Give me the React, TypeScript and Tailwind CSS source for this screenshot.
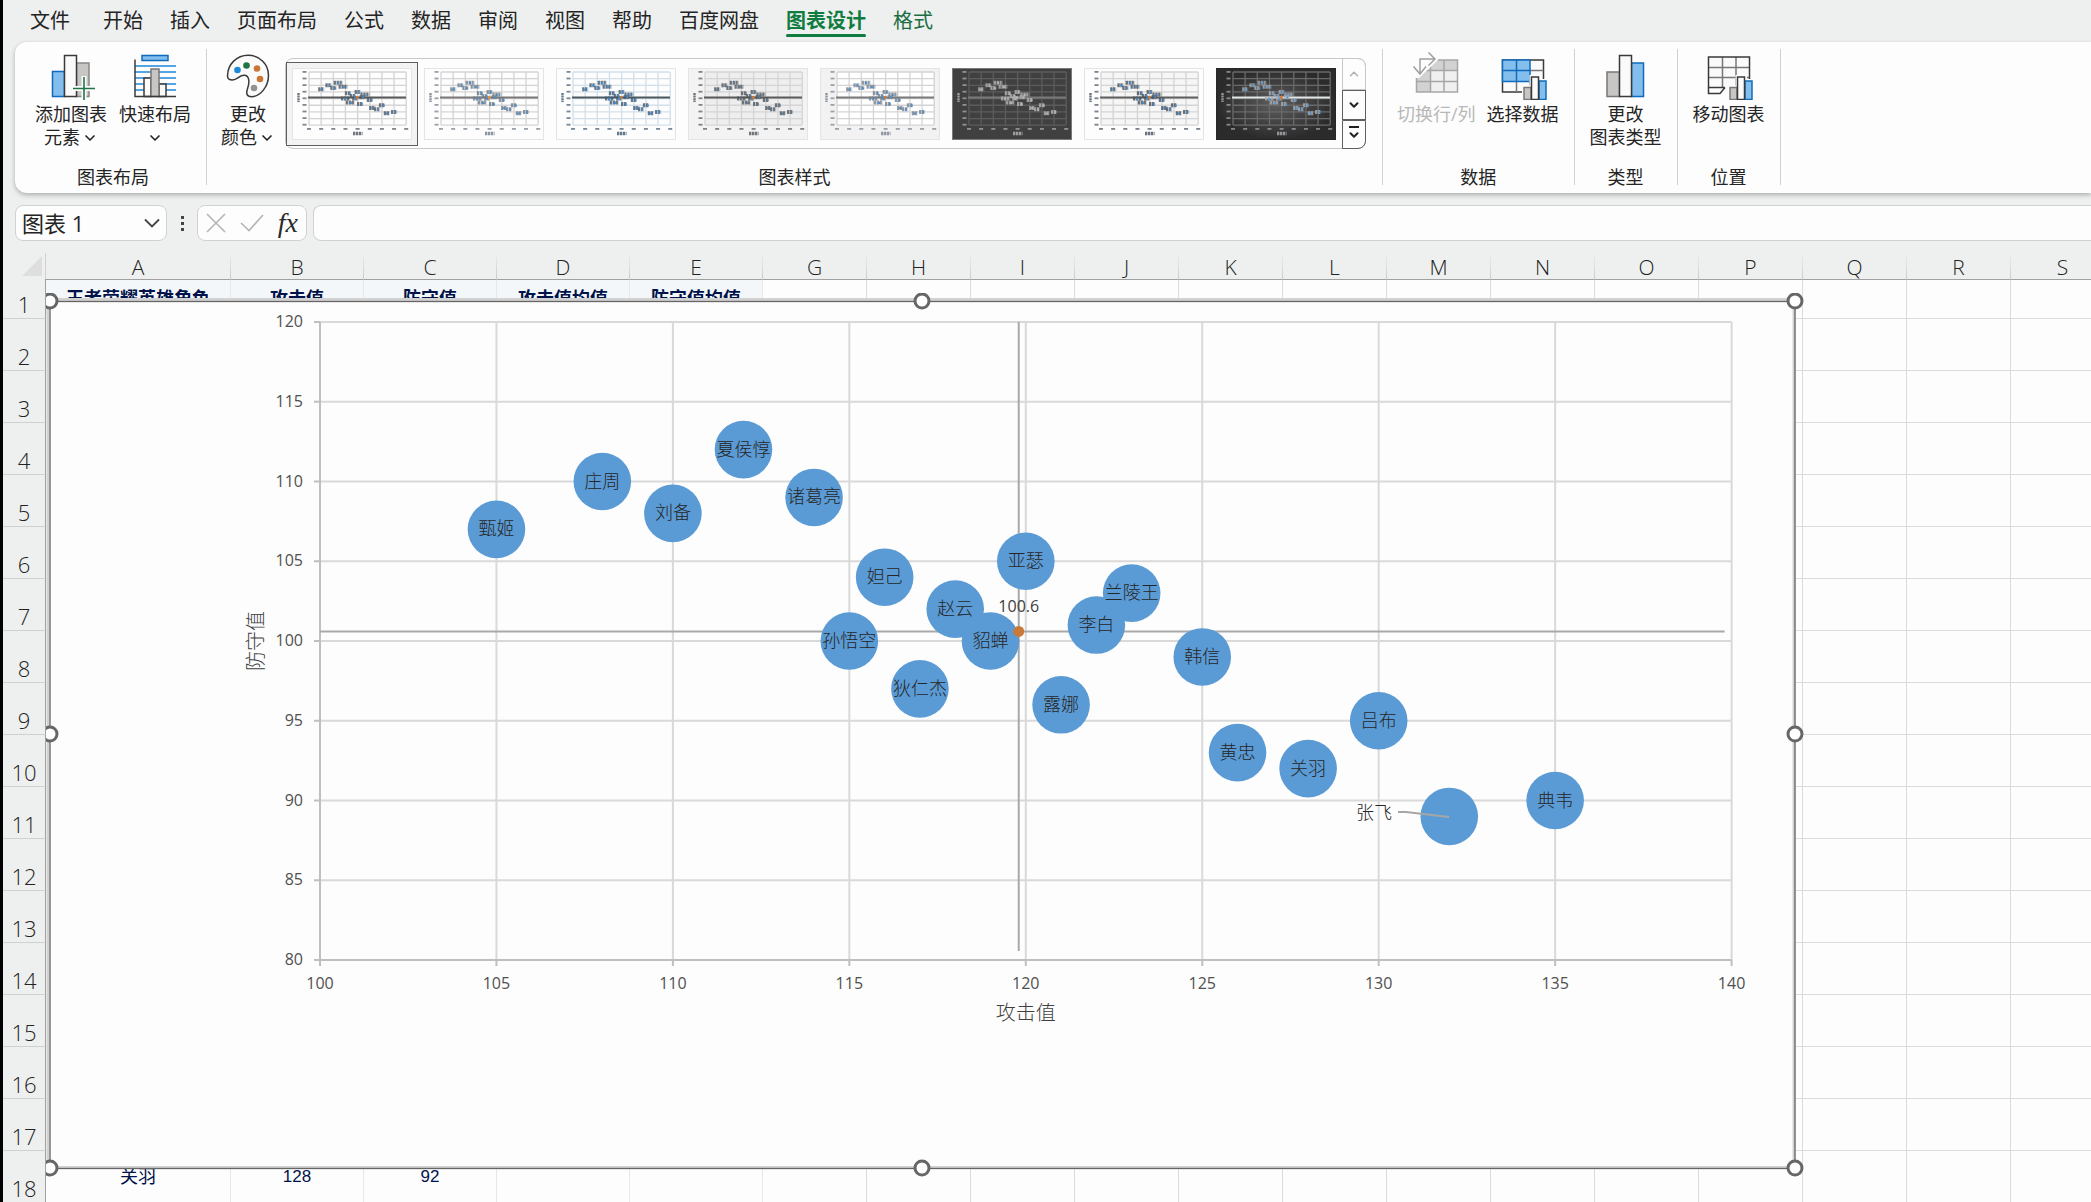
import { useState } from "react";
import type { ReactNode } from "react";
import { ChevronDown, ChevronUp } from "lucide-react";

const tabs = ["开始", "插入", "页面布局", "公式", "数据", "审阅", "视图", "帮助", "百度网盘", "图表设计", "格式"];

const heroes = [
  { name: "甄姬", attack: 105, defense: 107 },
  { name: "庄周", attack: 108, defense: 110 },
  { name: "刘备", attack: 110, defense: 108 },
  { name: "夏侯惇", attack: 112, defense: 112 },
  { name: "诸葛亮", attack: 114, defense: 109 },
  { name: "妲己", attack: 116, defense: 104 },
  { name: "孙悟空", attack: 115, defense: 100 },
  { name: "狄仁杰", attack: 117, defense: 97 },
  { name: "赵云", attack: 118, defense: 102 },
  { name: "貂蝉", attack: 119, defense: 100 },
  { name: "亚瑟", attack: 120, defense: 105 },
  { name: "露娜", attack: 121, defense: 96 },
  { name: "兰陵王", attack: 123, defense: 103 },
  { name: "李白", attack: 122, defense: 101 },
  { name: "韩信", attack: 125, defense: 99 },
  { name: "黄忠", attack: 126, defense: 93 },
  { name: "关羽", attack: 128, defense: 92 },
  { name: "吕布", attack: 130, defense: 95 },
  { name: "张飞", attack: 132, defense: 89 },
  { name: "典韦", attack: 135, defense: 90 },
];

const mean = { attack: 119.8, defense: 100.6 };

type ThumbStyle = {
  bg: string;
  plot: string;
  border: string;
  grid: string;
  text: string;
  mark: string;
  center: string;
  line: string;
};

const light: ThumbStyle = {
  bg: "#fdfdfd",
  plot: "#fdfdfd",
  border: "#e4e4e4",
  grid: "#d4d4d4",
  text: "#4d5560",
  mark: "#4a8fd0",
  center: "#c97a3a",
  line: "#5a5a5a",
};

const thumbs: ThumbStyle[] = [
  light,
  { ...light, text: "#6f7b88", line: "#7d7878", center: "#f09030" },
  { ...light, grid: "#d3dfe9", text: "#3f5870", line: "#4c5a60" },
  { ...light, bg: "#f3f3f3", plot: "#eeeeee", text: "#50565c", mark: "#5b7d9c" },
  { ...light, bg: "#f2f2f2", plot: "#ffffff", text: "#75808c", line: "#7a7a7a" },
  { ...light, bg: "#404040", plot: "#404040", border: "#7a7a7a", grid: "#5c5c5c", text: "#b4b4b4", mark: "#b4b4b4", center: "#b4b4b4", line: "#7a7a7a" },
  { ...light, plot: "#f6f6f6", text: "#45505c", line: "#5f5f5f" },
  { ...light, bg: "url(#vignette)", plot: "none", border: "#262626", grid: "#6a6a6a", text: "#a9adb2", mark: "#4f9ae0", center: "#e0702a", line: "#e2e6e6" },
];

function Thumbnail({ style }: { style: ThumbStyle }) {
  const px = (v: number) => 17 + (v - 100) * 2.43;
  const py = (v: number) => 4 + (120 - v) * 1.33;
  return (
    <svg width="120" height="72" viewBox="0 0 120 72" aria-hidden="true">
      <defs>
        <radialGradient id="vignette">
          <stop offset="0" stopColor="#5e5e5e" />
          <stop offset="1" stopColor="#2b2b2b" />
        </radialGradient>
        <filter id="soft">
          <feGaussianBlur stdDeviation="0.6" />
        </filter>
      </defs>
      <rect x="0.5" y="0.5" width="119" height="71" fill={style.bg} stroke={style.border} />
      <rect x="17" y="4" width="97" height="53" fill={style.plot} />
      <g stroke={style.grid} strokeWidth="1.3">
        {[0, 1, 2, 3, 4, 5, 6, 7, 8].map((i) => (
          <g key={i}>
            <line x1={17 + i * 12.15} x2={17 + i * 12.15} y1="4" y2="57" />
            <line x1="17" x2="114" y1={4 + i * 6.65} y2={4 + i * 6.65} />
          </g>
        ))}
      </g>
      <line x1="16" x2="114" y1="29.5" y2="29.5" stroke={style.line} strokeWidth="1.8" />
      <g filter="url(#soft)">
        {[0, 1, 2, 3, 4, 5, 6, 7, 8].map((i) => (
          <g key={i} fill={style.text} opacity="0.7">
            <rect x={10.5} y={3 + i * 6.6} width="4" height="1.8" />
            <rect x={15 + i * 12.15} y="60" width="4" height="1.8" />
          </g>
        ))}
        <path d="M6.5 25v9" stroke={style.text} strokeWidth="2.4" strokeDasharray="2 0.6" opacity="0.8" />
        <path d="M61 65.500h9.500" stroke={style.text} strokeWidth="3.400" strokeDasharray="2.400 0.600" opacity="0.8" />
        {heroes.map((h, i) => {
          const half = h.name.length * 1.5;
          const x = px(h.attack);
          const y = py(h.defense);
          return (
            <g key={h.name}>
              <path d={`M${x - half} ${y}h${half * 2}`} stroke={style.text} strokeWidth="4" strokeDasharray="2.300 0.600" opacity="0.8" />
              <rect x={x - 1 + (i % 3)} y={y - 0.8} width="1.8" height="2.2" fill={style.mark} />
            </g>
          );
        })}
        <circle cx={px(119.8)} cy="29.5" r="1.5" fill={style.center} />
      </g>
    </svg>
  );
}

function Icon({ children }: { children: ReactNode }) {
  return (
    <svg width="48" height="48" viewBox="0 0 48 48" fill="none" aria-hidden="true" className="shrink-0">
      {children}
    </svg>
  );
}

function AddElementIcon() {
  return (
    <Icon>
      <rect x="5.5" y="19.5" width="12" height="25" fill="#83beec" stroke="#0f6cbd" strokeWidth="1.5" />
      <rect x="29.5" y="11" width="12.5" height="33.5" fill="#c8c6c4" stroke="#8a8886" strokeWidth="1.5" />
      <rect x="17.5" y="3.5" width="12" height="41" fill="#fafafa" stroke="#3b3a39" strokeWidth="1.5" />
      <path d="M37 24v24M25 36.500h23" stroke="#fdfdfd" strokeWidth="5" />
      <path d="M37 25v23M26 36.500h22.500" stroke="#217346" strokeWidth="1.600" />
    </Icon>
  );
}

function QuickLayoutIcon() {
  return (
    <Icon>
      <rect x="11" y="3.500" width="26" height="5" fill="#83beec" stroke="#0f6cbd" strokeWidth="1.5" />
      <path d="M4 14h41M4 20h41M4 26h41M4 32h41M4 38h41" stroke="#1e88d9" strokeWidth="1.5" />
      <rect x="13" y="26" width="7" height="18.500" fill="#fafafa" stroke="#3b3a39" strokeWidth="1.5" />
      <rect x="28" y="32" width="7" height="12.500" fill="#fafafa" stroke="#3b3a39" strokeWidth="1.5" />
      <rect x="20" y="17" width="8" height="27.500" fill="#c8c6c4" stroke="#797775" strokeWidth="1.5" />
      <path d="M4 7.500v37h41" stroke="#3b3a39" strokeWidth="1.5" />
    </Icon>
  );
}

function PaletteIcon() {
  return (
    <Icon>
      <path
        d="M3.500 24C3.500 12 13 3.300 24 3.300c12 0 20.500 9 20.500 20C44.500 35 36 44.700 27.500 44.700c-5 0-5.500-3.500-4-8C25.500 31 26 23.300 20 23.300c-5 0-6.500 4.700-11.500 4.700-3.500 0-5-1.500-5-4z"
        fill="#fafafa"
        stroke="#3b3a39"
        strokeWidth="1.5"
      />
      <circle cx="13.5" cy="18" r="3.300" fill="#1e88d9" />
      <circle cx="22.500" cy="13.500" r="3.300" fill="#217346" />
      <circle cx="33" cy="16.500" r="3.300" fill="#ca7637" />
      <circle cx="36" cy="27" r="3.300" fill="#ca7637" />
      <circle cx="30" cy="36" r="3.300" fill="#949290" />
    </Icon>
  );
}

function SwitchIcon() {
  return (
    <Icon>
      <path d="M4.500 8h41v32h-41z" fill="#f0f0f0" />
      <path d="M4.500 8h41v10.500h-27V40h-14z" fill="#d2d2d2" />
      <path d="M4.500 8h41v32h-41zM18.500 8v32M32 8v32M4.500 18.500h41M4.500 29.500h41" stroke="#a6a6a6" strokeWidth="1.5" />
      <path d="M0 26V0h26v8L7 26z" fill="#fdfdfd" />
      <path d="M8 22V7h15M1.500 14.500L8 22l6-7.500M16.500 0.500L23 7l-6.500 6.500" stroke="#a0a0a0" strokeWidth="1.5" />
    </Icon>
  );
}

function SmallBars() {
  return (
    <>
      <path d="M23 48V33.500h7.500V23H42v4h6v21z" fill="#fdfdfd" />
      <rect x="25" y="35.500" width="7" height="12" fill="#c8c6c4" stroke="#797775" strokeWidth="1.5" />
      <rect x="40" y="29" width="7" height="18.500" fill="#83beec" stroke="#0f6cbd" strokeWidth="1.5" />
      <rect x="32.500" y="25" width="7" height="22.500" fill="#fafafa" stroke="#3b3a39" strokeWidth="1.5" />
    </>
  );
}

function SelectDataIcon() {
  return (
    <Icon>
      <path d="M3.500 8h41v32h-41z" fill="#fafafa" stroke="#3b3a39" strokeWidth="1.5" />
      <path d="M31 18.500h13.500M17.500 29.500V40M31 29.500V40" stroke="#797775" strokeWidth="1.5" />
      <path d="M3.500 8H31v21.500H3.500zM17.500 8v21.500M3.500 18.500H31" fill="#83beec" stroke="#0f6cbd" strokeWidth="1.500" />
      <SmallBars />
    </Icon>
  );
}

function ChangeTypeIcon() {
  return (
    <Icon>
      <rect x="5" y="20" width="12.500" height="24.500" fill="#c8c6c4" stroke="#797775" strokeWidth="1.5" />
      <rect x="29.500" y="11" width="12" height="33.500" fill="#83beec" stroke="#0f6cbd" strokeWidth="1.5" />
      <rect x="17.500" y="3.500" width="12" height="41" fill="#fafafa" stroke="#3b3a39" strokeWidth="1.5" />
    </Icon>
  );
}

function MoveChartIcon() {
  return (
    <Icon>
      <path d="M3.500 5h41v30.500h-41z" fill="#fafafa" />
      <path d="M17.500 5v30.500M31 5v30.500M3.500 15.500h41M3.500 25.500h41" stroke="#797775" strokeWidth="1.5" />
      <path d="M20 35.500H3.500V5h41v25M3.500 35.500v6H15l5-6" fill="none" stroke="#3b3a39" strokeWidth="1.5" />
      <SmallBars />
    </Icon>
  );
}

type RibbonButtonProps = {
  icon: ReactNode;
  lines: string[];
  dropdown?: boolean;
  disabled?: boolean;
  compact?: boolean;
};

function RibbonButton({ icon, lines, dropdown, disabled, compact }: RibbonButtonProps) {
  return (
    <button
      disabled={disabled}
      className={
        "flex flex-col items-center px-1 pt-[3px] text-lg leading-[23px] whitespace-nowrap disabled:text-[#b8b8b8] " +
        (compact ? "w-[74px]" : "min-w-[82px]")
      }
    >
      {icon}
      <span className="mt-[3px]">{lines[0]}</span>
      {lines.length > 1 && (
        <span className="flex h-[23px] items-center gap-0.5">
          {lines[1]}
          {dropdown && <ChevronDown size={16} strokeWidth={2.5} />}
        </span>
      )}
    </button>
  );
}

function RibbonGroup({ label, children }: { label: string; children: ReactNode }) {
  return (
    <section aria-label={label} className="flex shrink-0 flex-col border-r border-[#d1d1d1] px-2.5">
      <div className="flex flex-1 justify-center gap-0.5">{children}</div>
      <div className="text-center text-lg leading-4">{label}</div>
    </section>
  );
}

function StyleGallery() {
  const [selected, setSelected] = useState(0);
  return (
    <div className="mt-[9px] mr-1.5 flex h-[91px] rounded-lg border border-[#c8c8c8]">
      <div className="flex items-center">
        {thumbs.map((thumb, i) => (
          <button
            key={i}
            aria-label={`图表样式 ${i + 1}`}
            onClick={() => setSelected(i)}
            className={
              "flex h-[84px] w-[132px] items-center justify-center border " +
              (i === selected ? "border-[#5f5f5f] bg-[#f3f3f3]" : "border-transparent")
            }
          >
            <Thumbnail style={thumb} />
          </button>
        ))}
      </div>
      <div className="-my-px -mr-px flex w-6 flex-col">
        <button aria-label="向上" className="flex h-8 items-center justify-center rounded-tr-lg border border-[#c8c8c8] text-[#b0b0b0]">
          <ChevronUp size={14} strokeWidth={2.5} />
        </button>
        <button aria-label="向下" className="flex flex-1 items-center justify-center border border-[#5f5f5f]">
          <ChevronDown size={14} strokeWidth={3.5} />
        </button>
        <button aria-label="其他" className="flex flex-1 flex-col items-center justify-center rounded-br-lg border border-[#5f5f5f]">
          <span className="h-0.5 w-2.5 bg-[#1f1f1f]" />
          <ChevronDown size={14} strokeWidth={3.5} />
        </button>
      </div>
    </div>
  );
}

function Ribbon() {
  return (
    <div className="ml-3 flex h-[151px] shrink-0 overflow-hidden rounded-l-xl bg-[#fdfdfd] pt-[7px] pb-2 pl-[5px] shadow-[0_2px_5px_rgba(0,0,0,0.28)]">
      <RibbonGroup label="图表布局">
        <RibbonButton icon={<AddElementIcon />} lines={["添加图表", "元素"]} dropdown />
        <RibbonButton icon={<QuickLayoutIcon />} lines={["快速布局", ""]} dropdown />
      </RibbonGroup>
      <RibbonGroup label="图表样式">
        <div className="-ml-1.5 flex">
          <RibbonButton icon={<PaletteIcon />} lines={["更改", "颜色"]} dropdown compact />
          <StyleGallery />
        </div>
      </RibbonGroup>
      <RibbonGroup label="数据">
        <RibbonButton icon={<SwitchIcon />} lines={["切换行/列"]} disabled />
        <RibbonButton icon={<SelectDataIcon />} lines={["选择数据"]} />
      </RibbonGroup>
      <RibbonGroup label="类型">
        <RibbonButton icon={<ChangeTypeIcon />} lines={["更改", "图表类型"]} />
      </RibbonGroup>
      <RibbonGroup label="位置">
        <RibbonButton icon={<MoveChartIcon />} lines={["移动图表"]} />
      </RibbonGroup>
    </div>
  );
}

function FormulaBar() {
  return (
    <div className="mt-3 ml-3 flex h-9 shrink-0 items-stretch">
      <div className="flex w-[152px] items-center rounded-lg border border-[#d1d1d1] bg-[#fdfdfd] pr-1.5 pl-1.5">
        <input aria-label="名称框" defaultValue="图表 1" className="w-0 flex-1 bg-transparent text-[22px] leading-8 outline-none" />
        <button aria-label="名称列表">
          <svg width="16" height="10" viewBox="0 0 16 10" fill="none" stroke="#444" strokeWidth="1.8">
            <path d="M1 1.500l7 7 7-7" />
          </svg>
        </button>
      </div>
      <div className="flex w-[30px] flex-col items-center justify-center gap-[3px]">
        <span className="size-[3px] bg-[#444]" />
        <span className="size-[3px] bg-[#444]" />
        <span className="size-[3px] bg-[#444]" />
      </div>
      <div className="flex w-[110px] items-center justify-between rounded-lg border border-[#d1d1d1] bg-[#fdfdfd] px-2">
        <button aria-label="取消">
          <svg width="20" height="20" viewBox="0 0 20 20" fill="none" stroke="#b5b5b5" strokeWidth="1.6">
            <path d="M1 1l18 18M19 1L1 19" />
          </svg>
        </button>
        <button aria-label="输入">
          <svg width="24" height="20" viewBox="0 0 24 20" fill="none" stroke="#b5b5b5" strokeWidth="1.6">
            <path d="M1 10l8 7.500L23 2" />
          </svg>
        </button>
        <button aria-label="插入函数" className="font-['Liberation_Serif',serif] text-[28px] leading-7 font-medium text-[#2b2b2b] italic">
          fx
        </button>
      </div>
      <input aria-label="编辑栏" className="ml-1.5 min-w-0 flex-1 rounded-l-lg border border-r-0 border-[#d1d1d1] bg-[#fdfdfd] px-2 outline-none" />
    </div>
  );
}

const columns = ["A", "B", "C", "D", "E", "G", "H", "I", "J", "K", "L", "M", "N", "O", "P", "Q", "R", "S"];
const headings = ["王者荣耀英雄角色", "攻击值", "防守值", "攻击值均值", "防守值均值"];
const rows = Array.from({ length: 18 }, (_, i) => i + 1);

function cellText(row: number, col: number) {
  if (row === 1) return headings[col];
  if (row === 18) return ["关羽", "128", "92"][col];
  return undefined;
}

function columnWidth(col: number) {
  if (col === 0) return "w-[185px]";
  if (col < 5) return "w-[133px]";
  return "w-[104px]";
}

function cellClass(row: number, col: number) {
  let cls = "border-r p-0 text-center align-middle leading-5 whitespace-nowrap text-[#00124a] ";
  if (col < 5) cls += "border-r-[#e8e8e8] ";
  else cls += "border-r-[#dcdcdc] ";
  if (row === 1) cls += col < 5 ? "border-t border-t-[#a0a0a0] bg-[#f4f7fa] text-lg font-bold " : "border-t border-t-[#a0a0a0] ";
  else if (row === 18) cls += col === 0 ? "text-lg " : "text-[17px] ";
  cls += row === 18 ? "border-b border-b-[#b8b8b8]" : "border-b border-b-[#dcdcdc]";
  return cls;
}

function Grid() {
  return (
    <table className="w-[2112px] table-fixed border-separate border-spacing-0 bg-[#fdfdfd] font-['Liberation_Sans','Noto_Sans_CJK_SC',sans-serif]">
      <colgroup>
        <col className="w-[43px]" />
        {columns.map((c, i) => (
          <col key={c} className={columnWidth(i)} />
        ))}
      </colgroup>
      <thead>
        <tr className="h-[26px] bg-[#eef0ef]">
          <td className="border-r border-[#d0d0d0] p-0">
            <svg width="20" height="20" viewBox="0 0 20 20" className="ml-auto mr-[3px]" aria-hidden="true">
              <path d="M20 0v20H0z" fill="#dedede" />
            </svg>
          </td>
          {columns.map((c) => (
            <th
              key={c}
              scope="col"
              className="border-r p-0 pt-0.5 font-['Open_Sans','Noto_Sans',sans-serif] text-[21px] leading-6 font-light text-[#222] [border-image:linear-gradient(to_bottom,#eef0ef,#c8c8c8)_1]"
            >
              {c}
            </th>
          ))}
        </tr>
      </thead>
      <tbody>
        {rows.map((row) => (
          <tr key={row} className={row === 1 ? "h-10" : "h-[52px]"}>
            <th
              scope="row"
              className="border-r border-b border-r-[#a0a0a0] border-b-[#d0d0d0] bg-[#eef0ef] p-0 align-bottom font-['Open_Sans','Noto_Sans',sans-serif] text-[22px] leading-7 font-light text-[#222]"
            >
              {row}
            </th>
            {columns.map((c, i) => (
              <td key={c} className={cellClass(row, i)}>
                {cellText(row, i)}
              </td>
            ))}
          </tr>
        ))}
      </tbody>
    </table>
  );
}

const chartX = (v: number) => 274 + (v - 100) * 35.29;
const chartY = (v: number) => 29 + (120 - v) * 15.95;
const ticks = [0, 1, 2, 3, 4, 5, 6, 7, 8];
const handles = [
  [4, 8],
  [876, 8],
  [1749, 8],
  [4, 441],
  [1749, 441],
  [4, 875],
  [876, 875],
  [1749, 875],
];

function ScatterChart() {
  const left = chartX(100);
  const right = chartX(140);
  const top = chartY(120);
  const bottom = chartY(80);
  return (
    <svg
      width="1760"
      height="886"
      viewBox="0 0 1760 886"
      role="img"
      aria-label="图表 1"
      className="absolute top-10 left-[43px] font-['Open_Sans','Noto_Sans_CJK_SC',sans-serif]"
    >
      <rect x="2" y="6.500" width="1746" height="868" fill="#fdfdfd" stroke="#d2d2d2" strokeWidth="3" />
      <rect x="4" y="8.500" width="1745" height="867" fill="none" stroke="#666" strokeWidth="1.3" />

      {ticks.map((i) => (
        <g key={i}>
          <line x1={chartX(100 + i * 5)} x2={chartX(100 + i * 5)} y1={top} y2={bottom} stroke="#d9d9d9" strokeWidth="2" />
          <line x1={left} x2={right} y1={chartY(80 + i * 5)} y2={chartY(80 + i * 5)} stroke="#d9d9d9" strokeWidth="2" />
        </g>
      ))}
      <path d={`M${left} ${top}V${bottom}H${right}`} fill="none" stroke="#bfbfbf" strokeWidth="2" />
      {ticks.map((i) => (
        <g key={i} fill="#505050" fontSize="16">
          <line x1={left - 6} x2={left} y1={chartY(80 + i * 5)} y2={chartY(80 + i * 5)} stroke="#bfbfbf" strokeWidth="2" />
          <line x1={chartX(100 + i * 5)} x2={chartX(100 + i * 5)} y1={bottom} y2={bottom + 6} stroke="#bfbfbf" strokeWidth="2" />
          <text x={left - 17} y={chartY(80 + i * 5) + 5} textAnchor="end">
            {80 + i * 5}
          </text>
          <text x={chartX(100 + i * 5)} y={bottom + 29} textAnchor="middle">
            {100 + i * 5}
          </text>
        </g>
      ))}
      <text x={chartX(120)} y="727" textAnchor="middle" fontSize="20" fontWeight="300" fill="#404040">
        攻击值
      </text>
      <text transform="translate(217 348) rotate(-90)" textAnchor="middle" fontSize="20" fontWeight="300" fill="#404040">
        防守值
      </text>

      <g stroke="#a9a9a9" strokeWidth="2">
        <line x1={left} x2={right - 7} y1={chartY(mean.defense)} y2={chartY(mean.defense)} />
        <line x1={chartX(mean.attack)} x2={chartX(mean.attack)} y1={top} y2={bottom - 9} />
      </g>

      {heroes.map((h) => (
        <circle key={h.name} cx={chartX(h.attack)} cy={chartY(h.defense)} r="28.800" fill="#5b9bd5" />
      ))}
      <path d="M1352 519h8l43 5" fill="none" stroke="#a6a6a6" strokeWidth="2" />
      <g fontSize="18" fontWeight="300" fill="#262626" textAnchor="middle">
        {heroes.map((h) =>
          h.name === "张飞" ? (
            <text key={h.name} x="1328" y="526">
              {h.name}
            </text>
          ) : (
            <text key={h.name} x={chartX(h.attack)} y={chartY(h.defense) + 6}>
              {h.name}
            </text>
          ),
        )}
      </g>
      <circle cx={chartX(mean.attack)} cy={chartY(mean.defense)} r="5.500" fill="#c97a3a" />
      <text x={chartX(mean.attack)} y={chartY(mean.defense) - 19} textAnchor="middle" fontSize="16" fill="#404040">
        {mean.defense}
      </text>

      {handles.map(([x, y]) => (
        <circle key={`${x}-${y}`} cx={x} cy={y} r="7" fill="#fff" stroke="#666" strokeWidth="3" />
      ))}
    </svg>
  );
}

export default function App() {
  const [active, setActive] = useState("图表设计");

  return (
    <div className="flex h-screen flex-col overflow-hidden border-l-[3px] border-black bg-[#eef0ef] font-['Open_Sans','Noto_Sans_CJK_SC',sans-serif] text-[#242424]">
      <nav className="flex h-[42px] shrink-0 items-start gap-[27px] pl-[27px] text-xl leading-[42px]">
        <button className="mr-1.5 flex h-[38px] flex-col whitespace-nowrap">
          <span className="h-[34px]">文件</span>
        </button>
        {tabs.map((tab) => (
          <button
            key={tab}
            onClick={() => setActive(tab)}
            className={
              "flex h-[38px] flex-col whitespace-nowrap " +
              (tab === active ? "font-bold text-[#107c41]" : tab === "格式" ? "text-[#1b6e43]" : "")
            }
          >
            <span className="h-[34px]">{tab}</span>
            {tab === active && <span className="h-[3px] w-full rounded-full bg-[#107c41]" />}
          </button>
        ))}
      </nav>
      <Ribbon />
      <FormulaBar />
      <main className="relative mt-3 min-h-0 flex-1 overflow-hidden">
        <Grid />
        <ScatterChart />
      </main>
    </div>
  );
}
